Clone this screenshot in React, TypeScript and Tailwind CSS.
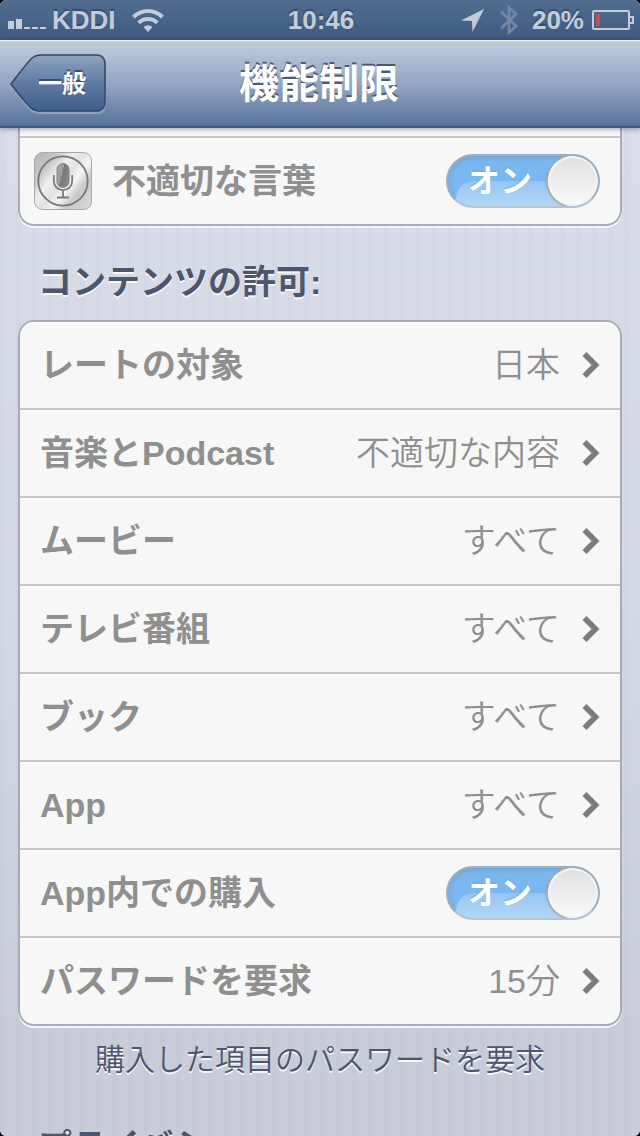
import { useState } from "react";

type LinkRow = { kind: "link"; label: string; value: string };
type SwitchRow = { kind: "switch"; label: string };
type Row = LinkRow | SwitchRow;

const rows: Row[] = [
  { kind: "link", label: "レートの対象", value: "日本" },
  { kind: "link", label: "音楽とPodcast", value: "不適切な内容" },
  { kind: "link", label: "ムービー", value: "すべて" },
  { kind: "link", label: "テレビ番組", value: "すべて" },
  { kind: "link", label: "ブック", value: "すべて" },
  { kind: "link", label: "App", value: "すべて" },
  { kind: "switch", label: "App内での購入" },
  { kind: "link", label: "パスワードを要求", value: "15分" },
];

function SignalIcon() {
  return (
    <svg width="38" height="10" viewBox="0 0 38 10" fill="currentColor" aria-hidden="true">
      <path d="M0 2h6v8H0zM8 0h6v10H8zM16 8h6v2h-6zM24 8h6v2h-6zM32 8h6v2h-6z" />
    </svg>
  );
}

function WifiIcon() {
  return (
    <svg width="32" height="24" viewBox="0 0 32 24" aria-hidden="true">
      <g fill="none" stroke="currentColor" strokeWidth="4">
        <path d="M1.600 9a20 20 0 0 1 28.800 0" />
        <path d="M6.800 14.800a13 13 0 0 1 18.400 0" />
      </g>
      <path d="M11.500 19a6.500 6.500 0 0 1 9 0L16 24z" fill="currentColor" />
    </svg>
  );
}

function LocationIcon() {
  return (
    <svg width="23" height="23" viewBox="0 0 23 23" fill="currentColor" aria-hidden="true">
      <path d="M23 0 11.500 23 11 12 0 11.500z" />
    </svg>
  );
}

function BluetoothIcon() {
  return (
    <svg width="18" height="32" viewBox="0 0 18 32" fill="none" stroke="#7187a5" strokeWidth="2.800" aria-hidden="true">
      <path d="M1 7.500 16 22 9 28.500V3.500L16 10 1 24.500" />
    </svg>
  );
}

function BatteryIcon() {
  return (
    <svg width="42" height="20" viewBox="0 0 42 20" aria-hidden="true">
      <rect x="1" y="1" width="36" height="18" rx="1" fill="none" stroke="currentColor" strokeWidth="2" />
      <path d="M38 7h3v6h-3" fill="none" stroke="currentColor" strokeWidth="2" />
      <path d="M4 4h4v12H4z" fill="#c4504f" />
    </svg>
  );
}

function MicIcon() {
  return (
    <svg width="58" height="58" viewBox="0 0 58 58" className="shrink-0" aria-hidden="true">
      <defs>
        <linearGradient id="steel" x1="0" y1="0.1" x2="1" y2="0.9">
          <stop offset="0" stopColor="#b9b9b9" />
          <stop offset="0.2" stopColor="#c6c6c6" />
          <stop offset="0.36" stopColor="#efefef" />
          <stop offset="0.5" stopColor="#e2e2e2" />
          <stop offset="0.62" stopColor="#f6f6f6" />
          <stop offset="0.76" stopColor="#c9c9c9" />
          <stop offset="1" stopColor="#d8d8d8" />
        </linearGradient>
        <linearGradient id="capsule" x1="0" y1="0" x2="1" y2="0.5">
          <stop offset="0" stopColor="#aaa" />
          <stop offset="0.5" stopColor="#999" />
          <stop offset="0.52" stopColor="#777" />
          <stop offset="1" stopColor="#888" />
        </linearGradient>
      </defs>
      <rect x="0.5" y="0.5" width="57" height="57" rx="8" fill="url(#steel)" stroke="#a6a8af" />
      <circle cx="29" cy="29" r="24.700" fill="none" stroke="#787878" strokeWidth="1.800" />
      <rect x="23" y="11.500" width="12" height="24" rx="6" fill="url(#capsule)" stroke="#808080" />
      <path d="M19.800 23v6a9.200 9.200 0 0 0 18.400 0V23M29 38v7M23 45.500h12" fill="none" stroke="#7c7c7c" strokeWidth="1.800" />
    </svg>
  );
}

function Chevron() {
  return (
    <svg width="18" height="26" viewBox="0 0 18 26" fill="none" stroke="#7c7c7c" strokeWidth="5.600" aria-hidden="true">
      <path d="M2.500 2 13.500 13 2.500 24" />
    </svg>
  );
}

function Toggle({ id }: { id: string }) {
  const [on, setOn] = useState(true);
  return (
    <span className="relative flex h-[54px] w-[154px] shrink-0 items-center overflow-hidden rounded-full border-2 border-[#9aaebf] border-b-[#b4c3d1] bg-[#7ab7ee] shadow-[inset_0_2px_4px_rgba(70,110,150,0.25)] has-[:focus-visible]:ring-2">
      <input
        id={id}
        type="checkbox"
        role="switch"
        checked={on}
        onChange={(e) => setOn(e.target.checked)}
        className="absolute inset-0 z-10 m-0 h-full w-full cursor-pointer appearance-none"
      />
      <span className="absolute bottom-0 left-2 right-2 h-[25px] rounded-tl-[18px] bg-linear-to-b from-[#94c5f3] to-[#b3d6f6]" />
      <span className={on ? "relative flex-1 pl-1 text-center text-[32px] leading-8 font-bold text-white [text-shadow:0_-1px_1px_#6ea6d8]" : "order-2 flex-1 text-center text-[32px] leading-8 font-bold text-white"}>
        {on ? "オン" : "オフ"}
      </span>
      <span className="relative h-[50px] w-[50px] rounded-full bg-linear-to-b from-[#e0e0e0] to-[#fafafa] shadow-[0_0_0_2px_#a9abad,-1px_0_3px_rgba(60,90,120,0.4),inset_0_0_0_2px_#f4f4f4]" />
    </span>
  );
}

function SectionTitle({ children }: { children: string }) {
  return (
    <h2 className="px-5 text-[34px] leading-10 font-bold text-[#4c566c] [text-shadow:0_2px_0_#f5f7fa]">
      {children}
    </h2>
  );
}

const rowLook =
  "flex h-[88px] w-full items-center justify-between border-b-2 border-[#c5c5c5] pl-5 pr-5 text-left text-[34px] leading-10 text-[#8f8f8f] shadow-[inset_0_2px_0_#fff]";

export default function App() {
  return (
    <div className="h-screen bg-black font-['Liberation_Sans','Noto_Sans_CJK_JP',sans-serif]">
      <div className="flex h-full flex-col overflow-hidden rounded-md bg-[#d5dae4]">
        <div className="grid h-10 shrink-0 grid-cols-[1fr_auto_1fr] items-center bg-linear-to-b from-[#526d8f] to-[#3d5a80] pl-2 pr-1.5 text-[26px] leading-8 font-bold text-[#c3ccd8] [text-shadow:0_-2px_1px_#344e70]">
          <div className="flex items-center">
            <span className="pt-2"><SignalIcon /></span>
            <span className="ml-1.5">KDDI</span>
            <span className="ml-4"><WifiIcon /></span>
          </div>
          <time>10:46</time>
          <div className="flex items-center justify-end">
            <LocationIcon />
            <span className="ml-4 mr-3.5"><BluetoothIcon /></span>
            <span className="mr-2">20%</span>
            <BatteryIcon />
          </div>
        </div>

        <header className="relative z-10 grid h-[88px] shrink-0 grid-cols-[1fr_auto_1fr] items-center border-t border-b-2 border-t-[#f4f7fa] border-b-[#3e5b84] bg-linear-to-b from-[#c0cddd] via-[#94a6c2] to-[#57739b] pl-2.5 pr-3 shadow-[0_1px_5px_rgba(0,0,0,0.35)]">
          <button className="relative flex h-[60px] w-24 items-center justify-center pl-2 text-2xl font-bold text-white [text-shadow:0_-2px_0_#3b4d6b]">
            <svg className="absolute inset-0" width="96" height="60" viewBox="0 0 96 60" aria-hidden="true">
              <defs>
                <linearGradient id="back" x1="0" y1="0" x2="0" y2="1">
                  <stop offset="0" stopColor="#91a3c0" />
                  <stop offset="0.5" stopColor="#5f7aa3" />
                  <stop offset="1" stopColor="#3e5e8e" />
                </linearGradient>
                <linearGradient id="backEdge" x1="0" y1="0" x2="0" y2="1">
                  <stop offset="0" stopColor="#3d4656" />
                  <stop offset="1" stopColor="#2f4b75" />
                </linearGradient>
              </defs>
              <path d="M1 32Q13 15 21 6Q25 3 31 3H86Q95 3 95 12V50Q95 59 86 59H31Q25 59 21 56Q13 48 1 32Z" fill="none" stroke="#8fa3c0" strokeWidth="2" />
              <path d="M1 30Q13 14 21 5Q25 1 31 1H86Q95 1 95 10V48Q95 57 86 57H31Q25 57 21 54Q13 46 1 30Z" fill="url(#back)" stroke="url(#backEdge)" strokeWidth="1.600" />
            </svg>
            <span className="relative">一般</span>
          </button>
          <h1 className="text-[40px] leading-[48px] font-bold text-white [text-shadow:0_-2px_0_#4a5a74]">機能制限</h1>
        </header>

        <main className="flex-1 overflow-y-auto bg-[repeating-linear-gradient(90deg,rgba(120,135,165,0.04)_0,rgba(120,135,165,0.04)_5px,transparent_5px,transparent_16px),linear-gradient(180deg,#d8dde7_0%,#d3d9e4_50%,#c8cdd7_90%)] px-[18px] [scrollbar-width:none]">
          <section className="overflow-hidden rounded-b-2xl border-x-2 border-b-2 border-[#a6acb7] bg-[#f7f7f7] shadow-[0_2px_0_#f4f6f9]">
            <div className="h-2.5 border-b-2 border-[#c5c5c5]" />
            <div className="flex h-[86px] items-center pl-3.5 pr-5 text-[34px] leading-10 font-bold text-[#8f8f8f] shadow-[inset_0_2px_0_#fff]">
              <MicIcon />
              <label htmlFor="explicit" className="ml-5 flex-1">不適切な言葉</label>
              <Toggle id="explicit" />
            </div>
          </section>

          <div className="pt-9 pb-[18px]">
            <SectionTitle>コンテンツの許可:</SectionTitle>
          </div>

          <section className="overflow-hidden rounded-2xl border-2 border-[#a6acb7] bg-[#f7f7f7] shadow-[0_2px_0_#f4f6f9] [&>*:last-child]:h-[86px] [&>*:last-child]:border-b-0">
            {rows.map((row) =>
              row.kind === "link" ? (
                <button key={row.label} className={rowLook}>
                  <span className="font-bold">{row.label}</span>
                  <span className="flex items-center gap-[22px]">
                    <span className="font-[350]">{row.value}</span>
                    <Chevron />
                  </span>
                </button>
              ) : (
                <div key={row.label} className={rowLook}>
                  <label htmlFor="in-app" className="font-bold">{row.label}</label>
                  <Toggle id="in-app" />
                </div>
              ),
            )}
          </section>

          <p className="pt-3.5 pb-[46px] text-center text-[30px] leading-10 font-[350] text-[#4c566c] [text-shadow:0_2px_0_#f5f7fa]">
            購入した項目のパスワードを要求
          </p>
          <SectionTitle>プライバシー:</SectionTitle>
        </main>
      </div>
    </div>
  );
}
